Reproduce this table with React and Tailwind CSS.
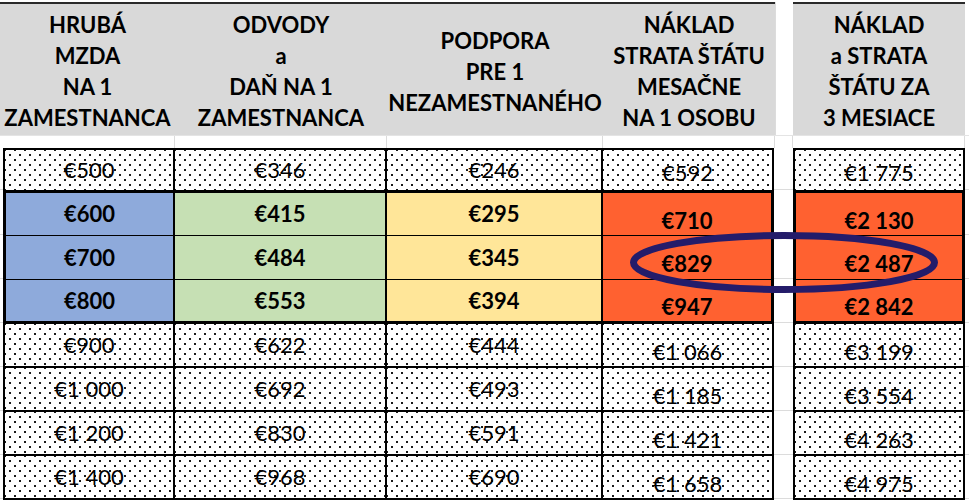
import React from "react";

const dots =
  "bg-white bg-[image:radial-gradient(circle,#1a1a1a_0.85px,transparent_1.3px),radial-gradient(circle,#1a1a1a_0.85px,transparent_1.3px)] bg-[length:10px_10px] bg-[position:0_0,5px_5px]";

const rowsTop = [["€500", "€346", "€246", "€592", "€1 775"]];
const rowsColored = [
  ["€600", "€415", "€295", "€710", "€2 130"],
  ["€700", "€484", "€345", "€829", "€2 487"],
  ["€800", "€553", "€394", "€947", "€2 842"],
];
const rowsBottom = [
  ["€900", "€622", "€444", "€1 066", "€3 199"],
  ["€1 000", "€692", "€493", "€1 185", "€3 554"],
  ["€1 200", "€830", "€591", "€1 421", "€4 263"],
  ["€1 400", "€968", "€690", "€1 658", "€4 975"],
];

const coloredHeights = ["h-[43px] border-b border-black", "h-[44px] border-b border-black", "h-[41px]"];

function Head({ lines }) {
  return (
    <div className="flex flex-col items-center justify-center pt-[3px]">
      {lines.map((l, i) => (
        <div key={i} className="whitespace-nowrap">
          {l}
        </div>
      ))}
    </div>
  );
}

function Grid({ heights }) {
  return (
    <div className="flex flex-col">
      {heights.map((h, i) => (
        <div key={i} className={`${h} border-b border-[#dcdcdc]`} />
      ))}
    </div>
  );
}

const gapHeights = ["h-[42px]", "h-[45px]", "h-[44px]", "h-[44px]", "h-[44px]", "h-[44px]", "h-[44px]", "h-[44px]"];

export default function App() {
  return (
    <div className="relative w-[969px] h-[504px] bg-white overflow-hidden text-black font-['Lato',sans-serif]">
      {/* header */}
      <div className="flex pt-[2px]">
        <div className="grid grid-cols-[175px_212px_216px_172px] h-[133px] border-t-2 border-[#2a2a2a] bg-[#d9d9d9] font-bold text-[22px] leading-[31px] text-center">
          <Head lines={["HRUBÁ", "MZDA", "NA 1", "ZAMESTNANCA"]} />
          <Head lines={["ODVODY", "a", "DAŇ NA 1", "ZAMESTNANCA"]} />
          <Head lines={["PODPORA", "PRE 1", "NEZAMESTNANÉHO"]} />
          <Head lines={["NÁKLAD", "STRATA ŠTÁTU", "MESAČNE", "NA 1 OSOBU"]} />
        </div>
        <div className="w-[18px] border-l border-[#dcdcdc]" />
        <div className="w-[172px] h-[133px] border-t-2 border-[#2a2a2a] bg-[#d9d9d9] font-bold text-[22px] leading-[31px] text-center grid">
          <Head lines={["NÁKLAD", "a STRATA", "ŠTÁTU ZA", "3 MESIACE"]} />
        </div>
      </div>

      {/* spacer between header and data */}
      <div className="flex h-[13px] border-t border-[#e4e4e4]">
        <div className="w-[175px] border-r border-[#dcdcdc]" />
        <div className="w-[212px] border-r border-[#dcdcdc]" />
        <div className="w-[216px] border-r border-[#dcdcdc]" />
        <div className="w-[172px] border-r border-[#dcdcdc]" />
        <div className="w-[18px] border-r border-[#dcdcdc]" />
        <div className="w-[172px] border-r border-[#dcdcdc]" />
      </div>

      {/* data */}
      <div className="flex text-[22px] leading-none">
        <div className="w-[3px]">
          <Grid heights={gapHeights} />
        </div>

        {/* main table */}
        <div className="w-[771px] flex flex-col">
          {rowsTop.map((r, i) => (
            <div key={i} className="grid grid-cols-[170px_212px_216px_171px] h-[42px] border-t-2 border-l-2 border-black">
              {r.slice(0, 3).map((v, j) => (
                <div key={j} className={`${dots} border-r-2 border-black flex items-center justify-center`}>
                  <span className="bg-white/0">{v}</span>
                </div>
              ))}
              <div className={`${dots} border-r-2 border-black flex items-center justify-center pt-[5px]`}>{r[3]}</div>
            </div>
          ))}

          <div className="border-[3px] border-black flex flex-col font-bold">
            {rowsColored.map((r, i) => (
              <div key={i} className={`grid grid-cols-[169px_212px_216px_168px] ${coloredHeights[i]}`}>
                <div className="bg-[#8eaadb] border-r-2 border-black flex items-center justify-center">{r[0]}</div>
                <div className="bg-[#c6e0b4] border-r-2 border-black flex items-center justify-center">{r[1]}</div>
                <div className="bg-[#ffe699] border-r-2 border-black flex items-center justify-center">{r[2]}</div>
                <div className="bg-[#ff6130] flex items-center justify-center pt-[13px]">{r[3]}</div>
              </div>
            ))}
          </div>

          {rowsBottom.map((r, i) => (
            <div key={i} className="grid grid-cols-[170px_212px_216px_171px] h-[44px] border-b-2 border-l-2 border-black">
              {r.slice(0, 3).map((v, j) => (
                <div key={j} className={`${dots} border-r-2 border-black flex items-center justify-center`}>
                  {v}
                </div>
              ))}
              <div className={`${dots} border-r-2 border-black flex items-center justify-center pt-[13px]`}>{r[3]}</div>
            </div>
          ))}
        </div>

        <div className="w-[19px]">
          <Grid heights={gapHeights} />
        </div>

        {/* right table */}
        <div className="w-[172px] flex flex-col">
          {rowsTop.map((r, i) => (
            <div key={i} className={`${dots} h-[42px] border-t-2 border-x-2 border-black flex items-center justify-center pt-[5px]`}>
              {r[4]}
            </div>
          ))}
          <div className="border-[3px] border-black flex flex-col font-bold">
            {rowsColored.map((r, i) => (
              <div key={i} className={`${coloredHeights[i]} bg-[#ff6130] flex items-center justify-center pt-[13px]`}>
                {r[4]}
              </div>
            ))}
          </div>
          {rowsBottom.map((r, i) => (
            <div key={i} className={`${dots} h-[44px] border-b-2 border-x-2 border-black flex items-center justify-center pt-[13px]`}>
              {r[4]}
            </div>
          ))}
        </div>

        <div className="flex-1">
          <Grid heights={gapHeights} />
        </div>
      </div>

      {/* highlight ellipse */}
      <svg className="absolute left-[626px] top-[228px]" width="316" height="70" viewBox="0 0 316 70">
        <ellipse cx="158" cy="34.5" rx="150.5" ry="27" fill="none" stroke="#241c6a" strokeWidth="7" />
      </svg>
    </div>
  );
}
